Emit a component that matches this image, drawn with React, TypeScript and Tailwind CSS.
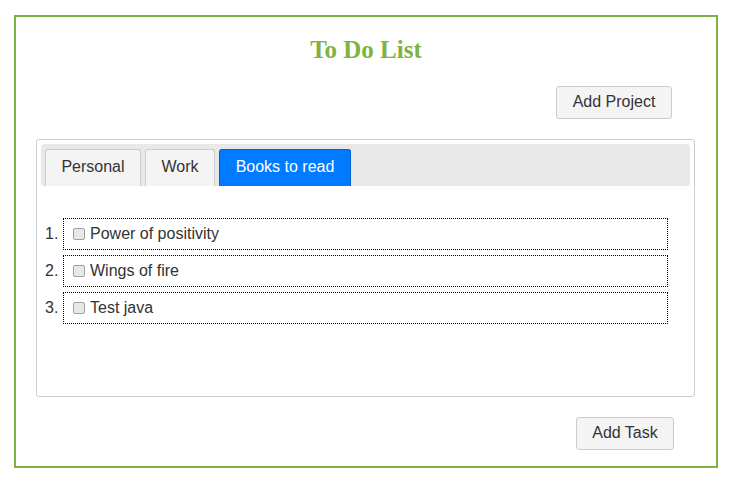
import React from "react";

const items = ["Power of positivity", "Wings of fire", "Test java"];

export default function App() {
  return (
    <div className="w-[731px] h-[483px] bg-white pt-[15px] pl-[14px]" style={{ fontFamily: '"Liberation Sans", Arial, sans-serif' }}>
      <div className="w-[704px] h-[453px] border-2 border-[#7cb342] flex flex-col">
        <h1 className="mt-[19px] text-center text-[25px] leading-[28px] font-bold text-[#7cb342]" style={{ fontFamily: '"Liberation Serif", "Times New Roman", serif' }}>
          To Do List
        </h1>
        <div className="flex justify-end pr-[44px] mt-[22px]">
          <button className="h-[33px] w-[116px] pb-[2px] bg-[#f4f4f4] border border-[#cccccc] rounded-[3px] text-[16px] text-[#333]">Add Project</button>
        </div>
        <div className="ml-[20px] mr-[21px] mt-[20px] h-[258px] border border-[#cccccc] rounded-[3px] p-[4px]">
          <div className="h-[42px] bg-[#e8e8e8] rounded-[3px] flex items-end gap-[4px] px-[4px]">
            <div className="h-[37px] w-[96px] pb-[2px] bg-[#f4f4f4] border border-b-0 border-[#cccccc] rounded-t-[3px] flex items-center justify-center text-[16px] text-[#333]">Personal</div>
            <div className="h-[37px] w-[70px] pb-[2px] bg-[#f4f4f4] border border-b-0 border-[#cccccc] rounded-t-[3px] flex items-center justify-center text-[16px] text-[#333]">Work</div>
            <div className="h-[37px] w-[132px] pb-[2px] bg-[#007bff] border border-b-0 border-[#0062cc] rounded-t-[3px] flex items-center justify-center text-[16px] text-white">Books to read</div>
          </div>
          <ol className="mt-[32px] pr-[22px] flex flex-col gap-[5px]">
            {items.map((t, i) => (
              <li key={t} className="flex items-center text-[16px] text-[#333]">
                <span className="w-[22px] pl-[4px] text-[#333]">{i + 1}.</span>
                <div className="flex-1 h-[32px] border border-dotted border-black flex items-center pl-[9px]">
                  <span className="w-[12px] h-[12px] border border-[#a0a0a0] bg-[#e8e8e8] rounded-[2px] mr-[5px]" />
                  <span>{t}</span>
                </div>
              </li>
            ))}
          </ol>
        </div>
        <div className="flex justify-end pr-[42px] mt-[20px]">
          <button className="h-[33px] w-[98px] pb-[2px] bg-[#f4f4f4] border border-[#cccccc] rounded-[3px] text-[16px] text-[#333]">Add Task</button>
        </div>
      </div>
    </div>
  );
}
